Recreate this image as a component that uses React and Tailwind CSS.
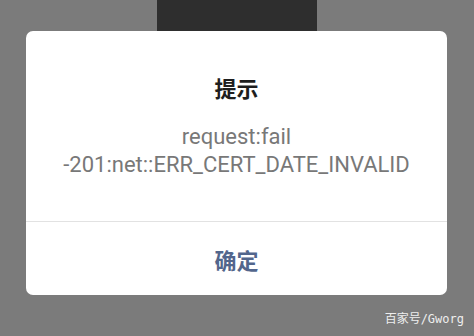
export default function App() {
  return (
    <div className="w-[474px] h-[336px] bg-[#7b7b7b] overflow-hidden flex flex-col">
      <div className="ml-[157px] w-[160px] h-[31px] bg-[#2e2e2e] shrink-0" />
      <div className="ml-[26px] w-[421px] h-[264px] bg-white rounded-[7px] flex flex-col shrink-0">
        <div className="h-[190px] flex flex-col items-center pt-[41px]">
          <div className="h-[30px] leading-[30px] text-[22px] font-bold text-[#1e1e1e] font-['Noto_Sans_CJK_SC',sans-serif]">提示</div>
          <div className="mt-[21px] text-center text-[22px] leading-[28px] text-[#787878] font-['Roboto',sans-serif]">
            <div>request:fail</div>
            <div>-201:net::ERR_CERT_DATE_INVALID</div>
          </div>
        </div>
        <div className="h-px bg-[#e2e2e2]" />
        <div className="flex-1 flex items-center justify-center">
          <span className="text-[22px] font-bold text-[#52668c] font-['Noto_Sans_CJK_SC',sans-serif] leading-[30px]">确定</span>
        </div>
      </div>
      <div className="flex justify-end pr-[10px] mt-[16px]">
        <span className="text-[12px] leading-[16px] text-[#eeeeee] font-['DejaVu_Sans_Mono','Noto_Sans_CJK_SC',monospace]">百家号/Gworg</span>
      </div>
    </div>
  );
}
